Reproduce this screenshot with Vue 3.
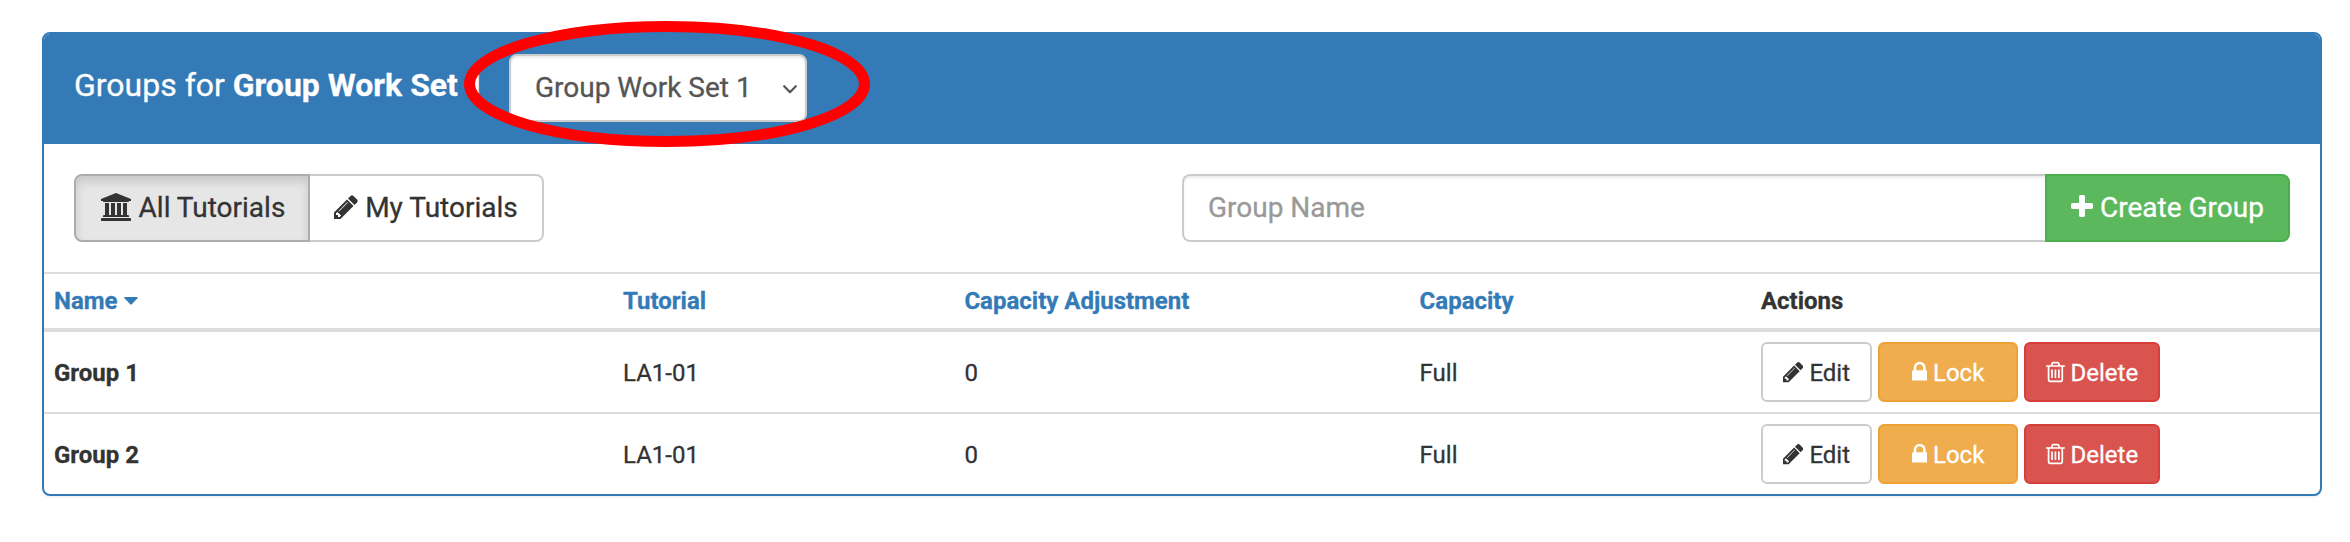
<script setup>
import { ref } from 'vue'

const icons = {
  university: {
    box: '0 128 1920 1792',
    d: 'M960 128l960 384v128h-128q0 26-20.5 45t-48.5 19H197q-28 0-48.5-19T128 640H0V512zM256 768h256v768h128V768h256v768h128V768h256v768h128V768h256v768h59q28 0 48.5 19t20.5 45v64H128v-64q0-26 20.5-45t48.5-19h59V768zm1595 960q28 0 48.5 19t20.5 45v128H0v-128q0-26 20.5-45t48.5-19h1782z',
  },
  pencil: {
    box: '128 0 1536 1792',
    d: 'M491 1536l91-91-235-235-91 91v107h128v128h107zm523-928q0-22-22-22-10 0-17 7l-542 542q-7 7-7 17 0 22 22 22 10 0 17-7l542-542q7-7 7-17zm-54-192l416 416-832 832H128v-416zm683 96q0 53-37 90l-166 166-416-416 166-165q36-38 90-38 53 0 91 38l235 234q37 39 37 91z',
  },
  plus: {
    box: '192 0 1408 1792',
    d: 'M1600 736v192q0 40-28 68t-68 28h-416v416q0 40-28 68t-68 28H800q-40 0-68-28t-28-68v-416H288q-40 0-68-28t-28-68V736q0-40 28-68t68-28h416V224q0-40 28-68t68-28h192q40 0 68 28t28 68v416h416q40 0 68 28t28 68z',
  },
  lock: {
    box: '320 0 1152 1792',
    d: 'M640 768h512V576q0-106-75-181t-181-75-181 75-75 181v192zm832 96v576q0 40-28 68t-68 28H416q-40 0-68-28t-28-68V864q0-40 28-68t68-28h32V576q0-184 132-316t316-132 316 132 132 316v192h32q40 0 68 28t28 68z',
  },
  trash: {
    box: '192 0 1408 1792',
    d: 'M704 736v576q0 14-9 23t-23 9h-64q-14 0-23-9t-9-23V736q0-14 9-23t23-9h64q14 0 23 9t9 23zm256 0v576q0 14-9 23t-23 9h-64q-14 0-23-9t-9-23V736q0-14 9-23t23-9h64q14 0 23 9t9 23zm256 0v576q0 14-9 23t-23 9h-64q-14 0-23-9t-9-23V736q0-14 9-23t23-9h64q14 0 23 9t9 23zm128 724V512H448v948q0 22 7 40.5t14.5 27 10.5 8.5h832q3 0 10.5-8.5t14.5-27 7-40.5zM672 384h448l-48-117q-7-9-17-11H738q-10 2-17 11zm928 32v64q0 14-9 23t-23 9h-96v948q0 83-47 143.5t-113 60.5H480q-66 0-113-58.5T320 1464V512h-96q-14 0-23-9t-9-23v-64q0-14 9-23t23-9h309l70-167q15-37 54-63t79-26h320q40 0 79 26t54 63l70 167h309q14 0 23 9t9 23z',
  },
}

const groupSet = ref('Group Work Set 1')
const groupName = ref('')
const groups = ref([
  { name: 'Group 1', tutorial: 'LA1-01', adjustment: 0, capacity: 'Full' },
  { name: 'Group 2', tutorial: 'LA1-01', adjustment: 0, capacity: 'Full' },
])
</script>

<template>
  <main class="page">
    <section class="panel">
      <header class="heading">
        <h3 class="title">Groups for <strong>{{ groupSet }}</strong></h3>
        <div class="picker">
          <select v-model="groupSet" class="select">
            <option>Group Work Set 1</option>
          </select>
          <svg class="chevron" viewBox="0 0 14 9"><path d="M1.2 1.2L7 7.2L12.8 1.2" /></svg>
        </div>
      </header>

      <div class="toolbar">
        <div class="tabs">
          <button class="btn tab active"><svg class="icon wide" :viewBox="icons.university.box"><path :d="icons.university.d" /></svg> All Tutorials</button>
          <button class="btn tab mine"><svg class="icon pencil" :viewBox="icons.pencil.box"><path :d="icons.pencil.d" /></svg> My Tutorials</button>
        </div>
        <div class="create">
          <input v-model="groupName" class="input" placeholder="Group Name" />
          <button class="btn success"><svg class="icon plus" :viewBox="icons.plus.box"><path :d="icons.plus.d" /></svg> Create Group</button>
        </div>
      </div>

      <table class="table">
        <thead>
          <tr>
            <th class="c25"><a>Name <svg class="caret" viewBox="0 0 14 8"><path d="M1 0H13Q14.4 0 13.5 1.2L7.8 7.2Q7 8 6.2 7.2L.5 1.2Q-.4 0 1 0Z" /></svg></a></th>
            <th class="c15"><a>Tutorial</a></th>
            <th class="c20"><a>Capacity Adjustment</a></th>
            <th class="c15"><a>Capacity</a></th>
            <th class="c25">Actions</th>
          </tr>
        </thead>
        <tbody>
          <tr v-for="g in groups" :key="g.name">
            <td class="name"><span class="value">{{ g.name }}</span></td>
            <td><span class="value">{{ g.tutorial }}</span></td>
            <td><span class="value">{{ g.adjustment }}</span></td>
            <td><span class="value">{{ g.capacity }}</span></td>
            <td>
              <div class="actions">
                <button class="btn small edit"><svg class="icon pencil" :viewBox="icons.pencil.box"><path :d="icons.pencil.d" /></svg> Edit</button>
                <button class="btn small warning"><svg class="icon lock" :viewBox="icons.lock.box"><path :d="icons.lock.d" /></svg> Lock</button>
                <button class="btn small danger"><svg class="icon trash" :viewBox="icons.trash.box"><path :d="icons.trash.d" /></svg> Delete</button>
              </div>
            </td>
          </tr>
        </tbody>
      </table>
    </section>
    <svg class="highlight" viewBox="0 0 406 126"><ellipse cx="203" cy="63" rx="197.5" ry="57.5" /></svg>
  </main>
</template>

<style>
body {
  margin: 0;
  background: #fff;
}
</style>

<style scoped>
* {
  box-sizing: border-box;
}
.page {
  position: relative;
  height: 542px;
  padding: 32px 28px 0 42px;
  overflow: hidden;
  font-family: Roboto, sans-serif;
  font-size: 24px;
  color: #333;
  -webkit-text-stroke: 0.3px;
}
.panel {
  height: 464px;
  border: 2px solid #337ab7;
  border-radius: 8px;
  background: #fff;
  box-shadow: 0 2px 2px rgba(0, 0, 0, 0.05);
}
.heading {
  display: flex;
  align-items: flex-start;
  height: 110px;
  padding: 20px 30px;
  border-radius: 6px 6px 0 0;
  background: #337ab7;
  color: #fff;
}
.title {
  width: 435px;
  margin: 12px 0 0;
  font-size: 32px;
  font-weight: 400;
  line-height: 38px;
  white-space: nowrap;
}
.title strong {
  font-weight: 700;
}
.picker {
  position: relative;
  width: 298px;
  height: 68px;
}
.select {
  display: block;
  width: 100%;
  height: 68px;
  padding: 12px 24px;
  border: 2px solid #ccc;
  border-radius: 8px;
  background: #fff;
  box-shadow: inset 0 2px 2px rgba(0, 0, 0, 0.075);
  color: #555;
  font: 28px/40px Roboto, sans-serif;
  appearance: none;
}
.chevron {
  position: absolute;
  top: 31px;
  right: 10px;
  width: 14px;
  height: 9px;
  fill: none;
  stroke: #555;
  stroke-width: 2.2;
  stroke-linecap: round;
  stroke-linejoin: round;
}
.toolbar {
  display: flex;
  justify-content: space-between;
  padding: 30px;
}
.tabs,
.create,
.actions {
  display: flex;
}
.btn {
  height: 68px;
  padding: 0;
  border: 2px solid #ccc;
  border-radius: 8px;
  background: #fff;
  color: #333;
  font: 28px/40px Roboto, sans-serif;
  text-align: center;
  white-space: nowrap;
}
.tab.active {
  width: 236px;
  padding-left: 2px;
  border-color: #adadad;
  border-radius: 8px 0 0 8px;
  background: #e6e6e6;
  box-shadow: inset 0 6px 10px rgba(0, 0, 0, 0.125);
}
.tab.mine {
  width: 234px;
  border-left: 0;
  border-radius: 0 8px 8px 0;
}
.input {
  width: 863px;
  height: 68px;
  padding: 11px 24px 13px;
  border: 2px solid #ccc;
  border-right: 0;
  border-radius: 8px 0 0 8px;
  outline: 0;
  background: #fff;
  box-shadow: inset 0 2px 2px rgba(0, 0, 0, 0.075);
  color: #555;
  font: 28px/40px Roboto, sans-serif;
}
.input::placeholder {
  color: #999;
  opacity: 1;
}
.success {
  width: 245px;
  border-color: #4cae4c;
  border-radius: 0 8px 8px 0;
  background: #5cb85c;
  color: #fff;
}
.icon {
  height: 1em;
  fill: currentColor;
  vertical-align: -0.143em;
}
.wide {
  width: 1.0714em;
  margin-right: 1px;
}
.pencil {
  width: 0.8571em;
}
.plus,
.trash {
  width: 0.7857em;
}
.lock {
  width: 0.6429em;
}
.table {
  width: 100%;
  border-collapse: separate;
  border-spacing: 0;
  table-layout: fixed;
}
.c25 {
  width: 25%;
}
.c20 {
  width: 20%;
}
.c15 {
  width: 15%;
}
th,
td {
  padding: 0 10px;
  border-top: 2px solid #ddd;
  text-align: left;
  line-height: 34px;
  white-space: nowrap;
}
th {
  height: 60px;
  border-bottom: 4px solid #ddd;
  font-weight: 700;
}
th a {
  color: #337ab7;
}
td {
  height: 82px;
}
tbody tr:first-child td {
  height: 80px;
  border-top: 0;
}
.value {
  display: block;
  padding-top: 2px;
}
.name {
  font-weight: 700;
}
.caret {
  width: 14px;
  height: 8px;
  fill: currentColor;
  vertical-align: 4px;
}
.actions {
  gap: 6px;
}
.small {
  height: 60px;
  padding-top: 2px;
  border-radius: 6px;
  font-size: 24px;
  line-height: 36px;
}
.edit {
  width: 111px;
}
.warning {
  width: 140px;
  border-color: #eea236;
  background: #f0ad4e;
  color: #fff;
}
.danger {
  width: 136px;
  border-color: #d43f3a;
  background: #d9534f;
  color: #fff;
}
.highlight {
  position: absolute;
  top: 21px;
  left: 464px;
  width: 406px;
  height: 126px;
  fill: none;
  stroke: #f00;
  stroke-width: 11;
}
</style>
